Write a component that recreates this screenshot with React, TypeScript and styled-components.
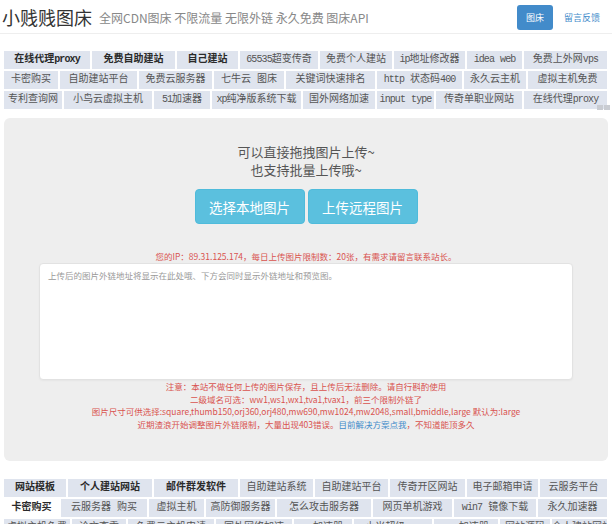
import React from "react";
import styled, { createGlobalStyle } from "styled-components";

const GlobalStyle = createGlobalStyle`
  html, body {
    margin: 0;
    padding: 0;
    background: #fff;
  }
  body {
    font-family: "Noto Sans CJK SC", "Liberation Sans", sans-serif;
    color: #333;
  }
`;

type Ad = { text: string; w: number; bold?: boolean; active?: boolean };

const topAds: Ad[][] = [
  [
    { text: "在线代理proxy", w: 86, bold: true },
    { text: "免费自助建站", w: 83, bold: true },
    { text: "自己建站", w: 61, bold: true },
    { text: "65535超变传奇", w: 78 },
    { text: "免费个人建站", w: 72 },
    { text: "ip地址修改器", w: 71 },
    { text: "idea web", w: 55 },
    { text: "免费上外网vps", w: 83 },
  ],
  [
    { text: "卡密购买", w: 54 },
    { text: "自助建站平台", w: 77 },
    { text: "免费云服务器", w: 73 },
    { text: "七牛云 图床", w: 70 },
    { text: "关键词快速排名", w: 89 },
    { text: "http 状态码400", w: 85 },
    { text: "永久云主机", w: 62 },
    { text: "虚拟主机免费", w: 79 },
  ],
  [
    { text: "专利查询网", w: 58 },
    { text: "小鸟云虚拟主机", w: 88 },
    { text: "51加速器", w: 56 },
    { text: "xp纯净版系统下载", w: 89 },
    { text: "国外网络加速", w: 72 },
    { text: "input type", w: 57 },
    { text: "传奇单职业网站", w: 86 },
    { text: "在线代理proxy", w: 83 },
  ],
];

const bottomAds: Ad[][] = [
  [
    { text: "网站模板", w: 62, bold: true },
    { text: "个人建站网站", w: 84, bold: true },
    { text: "邮件群发软件", w: 84, bold: true },
    { text: "自助建站系统", w: 73 },
    { text: "自助建站平台", w: 73 },
    { text: "传奇开区网站", w: 75 },
    { text: "电子邮箱申请", w: 71 },
    { text: "云服务平台", w: 67 },
  ],
  [
    { text: "卡密购买", w: 55, active: true },
    { text: "云服务器 购买", w: 86 },
    { text: "虚拟主机", w: 55 },
    { text: "高防御服务器", w: 69 },
    { text: "怎么攻击服务器", w: 94 },
    { text: "网页单机游戏", w: 79 },
    { text: "win7 镜像下载", w: 82 },
    { text: "永久加速器", w: 69 },
  ],
  [
    { text: "虚拟主机免费", w: 66 },
    { text: "论文查重", w: 54 },
    { text: "免费云主机申请", w: 86 },
    { text: "国外网络加速", w: 76 },
    { text: "ss加速器", w: 58 },
    { text: "小米超级vpn", w: 78 },
    { text: "vpn加速器", w: 64 },
    { text: "网站源码", w: 50 },
    { text: "个人建站网站", w: 55 },
  ],
];

const Header = styled.header`
  height: 33px;
  border-bottom: 1px solid #eee;
  display: flex;
  align-items: center;
  padding: 0 12px 0 2px;
`;

const Title = styled.h1`
  margin: 0;
  font-size: 18px;
  line-height: 22px;
  font-weight: normal;
  color: #333;
`;

const Tagline = styled.span`
  margin-left: 7px;
  font-size: 12px;
  line-height: 16px;
  color: #888;
  padding-top: 3px;
`;

const Nav = styled.nav`
  margin-left: auto;
  display: flex;
  align-items: center;
  gap: 11px;
`;

const NavButton = styled.a`
  display: flex;
  align-items: center;
  justify-content: center;
  width: 36px;
  height: 25px;
  margin-top: 2px;
  border-radius: 3px;
  background: #428bca;
  color: #fff;
  font-size: 9px;
`;

const NavLink = styled.a`
  color: #428bca;
  font-size: 9px;
  margin-top: 2px;
`;

const AdBlock = styled.div<{ $top: number }>`
  position: relative;
  margin: ${(p) => p.$top}px 5px 0 4px;
  display: flex;
  flex-direction: column;
  gap: 2px;
`;

const AdRow = styled.div`
  display: flex;
  gap: 2px;
  height: 18px;
`;

const AdCell = styled.a<{ $w: number; $bold?: boolean; $active?: boolean }>`
  flex: 0 0 ${(p) => p.$w}px;
  background: ${(p) => (p.$active ? "#fff" : "#dfe4ee")};
  color: ${(p) => (p.$bold || p.$active ? "#2a2a2a" : "#555")};
  font-weight: ${(p) => (p.$bold || p.$active ? "bold" : "normal")};
  font-family: "Liberation Mono", "Noto Sans CJK SC", monospace;
  font-size: 10px;
  line-height: 18px;
  text-align: center;
  white-space: nowrap;
  overflow: hidden;
`;

/* half-width latin run inside an ad label */
const Latin = styled.span`
  letter-spacing: -0.9px;
`;

const AdMark = styled.span`
  position: absolute;
  right: -3px;
  bottom: -1px;
  display: flex;
  gap: 1px;
`;

const AdMarkDot = styled.i`
  display: block;
  width: 6px;
  height: 5px;
  background: #c9ccd2;
`;

const Panel = styled.section`
  margin: 9px 4px 0 4px;
  height: 343px;
  box-sizing: border-box;
  padding-top: 25px;
  background: #eee;
  border-radius: 6px;
  display: flex;
  flex-direction: column;
  align-items: center;
`;

const Hint = styled.p`
  margin: 0;
  font-size: 13px;
  line-height: 18px;
  color: #555;
  text-align: center;
`;

const ButtonRow = styled.div`
  margin-top: 10px;
  display: flex;
  gap: 3px;
`;

const UploadButton = styled.button`
  width: 110px;
  height: 35px;
  padding: 0;
  border: 1px solid #4fbbdb;
  border-radius: 4px;
  background: #5bc0de;
  color: #fff;
  font-family: "Noto Sans CJK SC", sans-serif;
  font-size: 13.5px;
`;

const Notice = styled.p`
  margin: 0;
  font-size: 8.5px;
  line-height: 12.6px;
  color: #d9534f;
  text-align: center;
  white-space: nowrap;
`;

const IpNotice = styled(Notice)`
  margin-top: 26px;
  line-height: 12px;
`;

const UrlBox = styled.textarea`
  display: block;
  margin-top: 1px;
  width: 534px;
  height: 117px;
  box-sizing: border-box;
  padding: 5px 8px;
  border: 1px solid #e2e2e2;
  border-radius: 4px;
  background: #fff;
  box-shadow: 0 1px 2px rgba(0, 0, 0, 0.04);
  font-family: "Noto Sans CJK SC", sans-serif;
  font-size: 8.5px;
  line-height: 12px;
  resize: none;
  outline: none;
  &::placeholder {
    color: #999;
  }
`;

const Notes = styled.div`
  display: flex;
  flex-direction: column;
  align-items: center;
`;

const NoteLink = styled.a`
  color: #428bca;
`;

function AdLabel({ text }: { text: string }) {
  return (
    <>
      {text
        .split(/([\x21-\x7e]+)/)
        .filter(Boolean)
        .map((part, i) =>
          /^[\x21-\x7e]+$/.test(part) ? <Latin key={i}>{part}</Latin> : <React.Fragment key={i}>{part}</React.Fragment>
        )}
    </>
  );
}

function AdTable({ rows, top, mark }: { rows: Ad[][]; top: number; mark?: boolean }) {
  return (
    <AdBlock $top={top}>
      {rows.map((row, i) => (
        <AdRow key={i}>
          {row.map((ad, j) => (
            <AdCell key={j} $w={ad.w} $bold={ad.bold} $active={ad.active}>
              <AdLabel text={ad.text} />
            </AdCell>
          ))}
        </AdRow>
      ))}
      {mark && (
        <AdMark>
          <AdMarkDot />
          <AdMarkDot />
        </AdMark>
      )}
    </AdBlock>
  );
}

export default function App() {
  return (
    <>
      <GlobalStyle />
      <Header>
        <Title>小贱贱图床</Title>
        <Tagline>全网CDN图床 不限流量 无限外链 永久免费 图床API</Tagline>
        <Nav>
          <NavButton>图床</NavButton>
          <NavLink>留言反馈</NavLink>
        </Nav>
      </Header>

      <AdTable rows={topAds} top={17} mark />

      <Panel>
        <Hint>可以直接拖拽图片上传~</Hint>
        <Hint>也支持批量上传哦~</Hint>
        <ButtonRow>
          <UploadButton>选择本地图片</UploadButton>
          <UploadButton>上传远程图片</UploadButton>
        </ButtonRow>
        <IpNotice>您的IP：89.31.125.174，每日上传图片限制数：20张，有需求请留言联系站长。</IpNotice>
        <UrlBox placeholder="上传后的图片外链地址将显示在此处哦、下方会同时显示外链地址和预览图。" />
        <Notes>
          <Notice>注意：本站不做任何上传的图片保存，且上传后无法删除。请自行斟酌使用</Notice>
          <Notice>二级域名可选：ww1,ws1,wx1,tva1,tvax1，前三个限制外链了</Notice>
          <Notice>
            图片尺寸可供选择:square,thumb150,orj360,orj480,mw690,mw1024,mw2048,small,bmiddle,large 默认为:large
          </Notice>
          <Notice>
            近期渣浪开始调整图片外链限制，大量出现403错误。<NoteLink>目前解决方案点我</NoteLink>，不知道能顶多久
          </Notice>
        </Notes>
      </Panel>

      <AdTable rows={bottomAds} top={18} />
    </>
  );
}
